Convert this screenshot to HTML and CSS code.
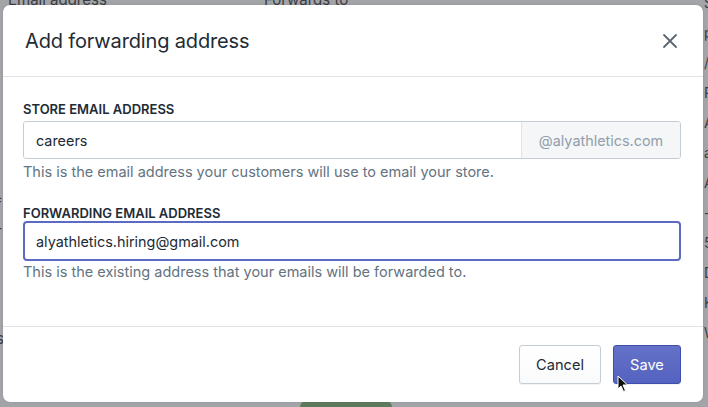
FILE: index.html
```html
<!DOCTYPE html>
<html lang="en">
<head>
  <meta charset="UTF-8" />
  <title>Add forwarding address</title>
  <link rel="stylesheet" href="styles.css">
</head>
<body>
  <div class="page">
    <div class="page-head">
      <span class="col-email">Email address</span>
      <span class="col-fwd">Forwards to</span>
    </div>
    <div class="page-right">
      <span>S</span><span>p</span><span>/</span><span>R</span><span>A</span><span>al</span><span>A</span><span>-</span><span>5</span><span>D</span><span>K</span><span>W</span>
    </div>
    <div class="page-left">
      <span>f</span><span>r</span><span>s</span>
    </div>
    <div class="page-btn"></div>
  </div>

  <div class="modal">
    <div class="modal-header">
      <h2>Add forwarding address</h2>
      <button class="close" aria-label="Close">
        <svg width="16" height="16" viewBox="0 0 16 16"><path d="M2 2 L14 14 M14 2 L2 14" stroke="#5c6570" stroke-width="1.8" stroke-linecap="round"/></svg>
      </button>
    </div>
    <div class="modal-body">
      <div class="field">
        <label>STORE EMAIL ADDRESS</label>
        <div class="input-group">
          <input value="careers">
          <span class="suffix">@alyathletics.com</span>
        </div>
        <p class="help">This is the email address your customers will use to email your store.</p>
      </div>
      <div class="field field-focused">
        <label>FORWARDING EMAIL ADDRESS</label>
        <input class="focused" value="alyathletics.hiring@gmail.com">
        <p class="help">This is the existing address that your emails will be forwarded to.</p>
      </div>
    </div>
    <div class="modal-footer">
      <button class="btn">Cancel</button>
      <button class="btn primary">Save</button>
    </div>
  </div>

  <svg class="cursor" width="12" height="18" viewBox="0 0 12 18"><path d="M1 1 L1 14 L4 11 L6.5 16.5 L8.5 15.5 L6 10 L10.5 10 Z" fill="#111" stroke="#fff" stroke-width="1"/></svg>
</body>
</html>
```

FILE: styles.css
```css
body { margin:0; width:708px; height:407px; overflow:hidden; background:#a3a4a8; font-family: Inter, "Liberation Sans", sans-serif; position:relative; }

.page { position:absolute; inset:0; color:#3b3d42; font-size:15px; }
.page-head { position:absolute; top:-10px; left:8px; display:flex; }
.col-email { width:256px; }
.page-right { position:absolute; left:704px; top:-6px; display:flex; flex-direction:column; gap:13px; font-size:14px; }
.page-left { position:absolute; left:-4px; top:195px; display:flex; flex-direction:column; gap:8px; }
.page-left span:last-child { margin-top:80px; }
.page-btn { position:absolute; left:300px; top:401px; width:92px; height:20px; border-radius:6px; background:#5e7a5c; }

.modal { position:absolute; left:3px; top:5px; width:700px; height:397px; background:#fff; border-radius:7px; display:flex; flex-direction:column; box-shadow:0 0 2px rgba(0,0,0,0.15); }

.modal-header { height:71px; display:flex; align-items:center; justify-content:space-between; padding:0 25px 0 22px; border-bottom:1px solid #dfe3e8; }
.modal-header h2 { margin:0; font-size:20px; font-weight:400; color:#212b36; letter-spacing:-0.15px; }
.close { border:none; background:none; padding:0; width:16px; height:16px; cursor:pointer; }
.close svg { display:block; }

.modal-body { flex:1; padding:24px 22px 0 20px; }
.field { margin-bottom:23px; }
.field label { display:block; font-size:13px; font-weight:600; color:#212b36; line-height:16px; margin-bottom:4px; }
.field input { box-sizing:border-box; width:100%; height:38px; border:1px solid #c4cdd5; border-radius:3px; padding:0 12px; font-family:inherit; font-size:14.4px; color:#212b36; outline:none; background:#fff; }
.field-focused label { margin-bottom:0; }
.field-focused .help { margin-top:1px; }
.field input.focused { height:40px; border:2px solid #5c6ac4; border-radius:4px; padding:0 11px; }
.input-group { display:flex; height:38px; border:1px solid #c4cdd5; border-radius:3px; box-sizing:border-box; overflow:hidden; }
.input-group input { flex:1; height:100%; border:none; border-radius:0; }
.suffix { width:159px; box-sizing:border-box; background:#f4f6f8; border-left:1px solid #dfe3e8; color:#919eab; font-size:14.4px; display:flex; align-items:center; justify-content:center; }
.help { margin:3px 0 0; font-size:14.5px; line-height:20px; color:#637381; }

.modal-footer { height:75px; border-top:1px solid #dfe3e8; display:flex; align-items:center; justify-content:flex-end; gap:12px; padding:0 22px; }
.btn { height:39px; width:82px; padding:0; font-family:inherit; font-size:14.6px; border-radius:3px; border:1px solid #c4cdd5; background:linear-gradient(#fff, #f9fafb); color:#212b36; box-shadow:0 1px 0 rgba(22,29,37,0.05); cursor:pointer; }
.btn.primary { width:68px; background:linear-gradient(#6371c7, #5563c1); border-color:#3f4eae; color:#fff; }

.cursor { position:absolute; left:617px; top:375px; }
```
